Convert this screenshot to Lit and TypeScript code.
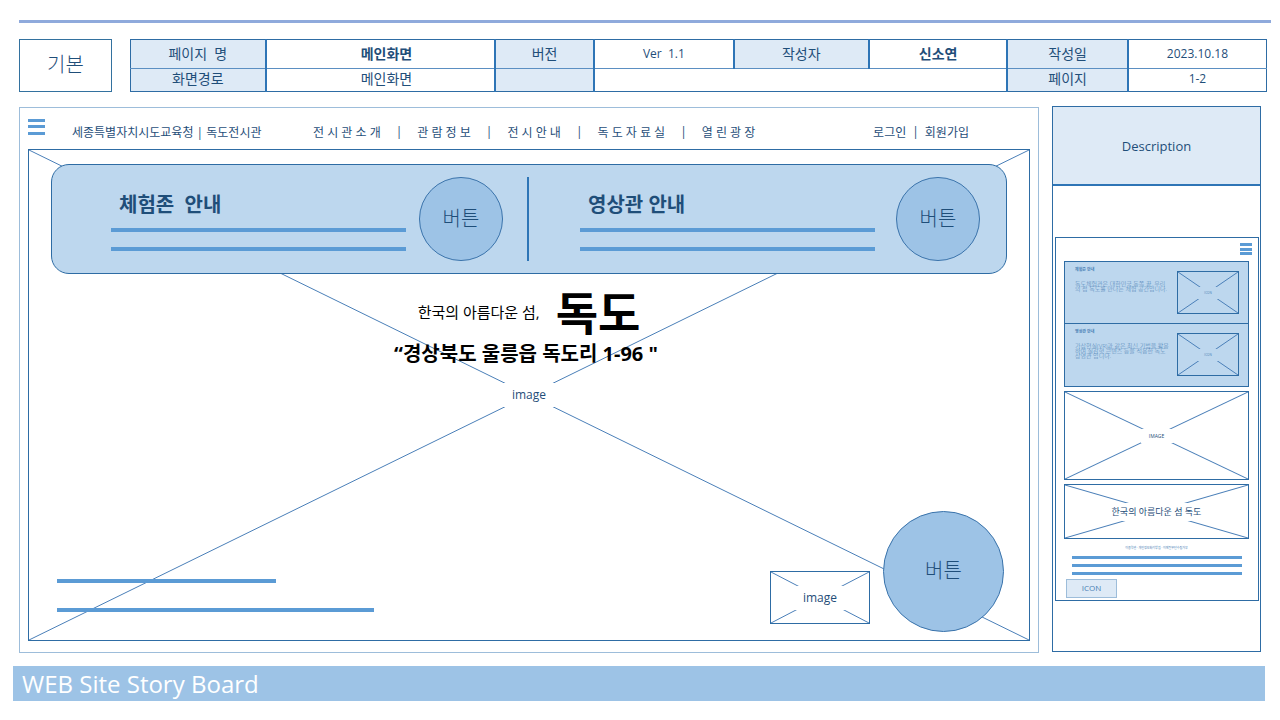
import { LitElement, html, css } from "lit";
import { customElement, property } from "lit/decorators.js";

const base = css`
  *,
  *::before,
  *::after {
    box-sizing: border-box;
  }
  button {
    margin: 0;
    padding: 0;
    font: inherit;
    color: inherit;
    cursor: pointer;
  }
  a {
    color: inherit;
    text-decoration: none;
  }
  h1,
  h2,
  h3,
  p {
    margin: 0;
    font: inherit;
  }
`;

/* Placeholder picture: a framed box with crossing diagonals and a centred label. */
@customElement("wire-image")
class WireImage extends LitElement {
  @property() label = "";

  static styles = [
    base,
    css`
      :host {
        display: grid;
        position: relative;
        border: 1px solid #2e6ca4;
      }
      svg {
        grid-area: 1 / 1;
        width: 100%;
        height: 100%;
        min-height: 0;
        position: absolute;
        inset: 0;
      }
      line {
        stroke: #4a7fb8;
        stroke-width: 1;
        vector-effect: non-scaling-stroke;
      }
      .label {
        grid-area: 1 / 1;
        place-self: center;
        position: relative;
        min-width: var(--label-width, 60px);
        text-align: center;
        line-height: var(--label-height, 24px);
        background: var(--label-fill, #fff);
      }
    `,
  ];

  render() {
    return html`
      <svg viewBox="0 0 100 100" preserveAspectRatio="none" aria-hidden="true">
        <line x1="0" y1="0" x2="100" y2="100"></line>
        <line x1="100" y1="0" x2="0" y2="100"></line>
      </svg>
      <span class="label">${this.label}</span>
    `;
  }
}

@customElement("menu-button")
class MenuButton extends LitElement {
  static styles = [
    base,
    css`
      :host {
        display: block;
      }
      button {
        display: flex;
        flex-direction: column;
        justify-content: space-between;
        width: 100%;
        height: 100%;
        border: 0;
        background: none;
      }
      span {
        height: 3px;
        background: #5b9bd5;
      }
    `,
  ];

  render() {
    return html`<button aria-label="메뉴"><span></span><span></span><span></span></button>`;
  }
}

@customElement("sheet-header")
class SheetHeader extends LitElement {
  static styles = [
    base,
    css`
      :host {
        display: flex;
        gap: 18px;
        height: 53px;
      }
      .kind {
        flex: 0 0 93px;
        display: grid;
        place-items: center;
        padding-bottom: 4px;
        border: 1px solid #33719f;
        font-size: 20px;
        font-weight: 300;
      }
      table {
        flex: 1;
        width: 100%;
        table-layout: fixed;
        border-collapse: collapse;
        border: 1px solid #2e6ca4;
        font-size: 14px;
        text-align: center;
      }
      th,
      td {
        padding: 0;
        border-left: 2px solid #2e75b6;
        border-bottom: 1px solid #5b8fc2;
        line-height: 20px;
        font-weight: 400;
      }
      th:first-child {
        border-left: 1px solid #2e6ca4;
      }
      tr:last-child > * {
        border-bottom: 1px solid #2e6ca4;
      }
      th {
        background: #deeaf6;
      }
      .first {
        height: 28px;
      }
      .second {
        height: 23px;
      }
      .second > * {
        padding-bottom: 2px;
      }
      .strong {
        font-weight: 700;
      }
      .name {
        padding-left: 12px;
      }
      .latin {
        font-size: 12px;
      }
      .c1 {
        width: 11.9%;
      }
      .c2 {
        width: 20.2%;
      }
      .c3 {
        width: 8.7%;
      }
      .c4 {
        width: 12.3%;
      }
      .c5 {
        width: 11.9%;
      }
      .c6 {
        width: 12.2%;
      }
      .c7 {
        width: 10.6%;
      }
    `,
  ];

  render() {
    return html`
      <div class="kind">기본</div>
      <table>
        <colgroup>
          <col class="c1" /><col class="c2" /><col class="c3" /><col class="c4" />
          <col class="c5" /><col class="c6" /><col class="c7" /><col />
        </colgroup>
        <tbody>
          <tr class="first">
            <th scope="row">페이지&nbsp; 명</th>
            <td class="strong name">메인화면</td>
            <th scope="row">버전</th>
            <td class="latin">Ver&nbsp; 1.1</td>
            <th scope="row">작성자</th>
            <td class="strong">신소연</td>
            <th scope="row">작성일</th>
            <td class="latin">2023.10.18</td>
          </tr>
          <tr class="second">
            <th scope="row">화면경로</th>
            <td class="name">메인화면</td>
            <th></th>
            <td colspan="3"></td>
            <th scope="row">페이지</th>
            <td class="latin">1-2</td>
          </tr>
        </tbody>
      </table>
    `;
  }
}

@customElement("desktop-board")
class DesktopBoard extends LitElement {
  static styles = [
    base,
    css`
      :host {
        display: flex;
        flex-direction: column;
        padding: 0 8px 11px;
        border: 1px solid #9dbdda;
      }
      .bar {
        display: flex;
        align-items: center;
        height: 41px;
        padding: 6px 61px 0 0;
        font-size: 12px;
      }
      .menu {
        flex: none;
        width: 17px;
        height: 16px;
        margin: 0 27px 10px 0;
      }
      .site {
        flex: 0 0 241px;
      }
      nav {
        display: flex;
        gap: 15px;
      }
      .account {
        display: flex;
        gap: 6px;
        margin-left: auto;
      }
      .stage {
        flex: 1;
        display: grid;
      }
      .stage > * {
        grid-area: 1 / 1;
      }
      .backdrop {
        font-size: 12px;
      }
      .layer {
        position: relative;
        display: flex;
        flex-direction: column;
        padding: 15px 23px 9px;
      }
      .banner {
        display: flex;
        align-items: center;
        height: 110px;
        padding: 0 26px 0 59px;
        border: 1px solid #2e6ca4;
        border-radius: 18px;
        background: #bdd7ee;
      }
      .topic {
        flex: 1;
        display: flex;
        flex-direction: column;
        gap: 15px;
        padding-top: 5px;
      }
      .topic h2 {
        padding-left: 8px;
        margin-bottom: -5px;
        font-size: 20px;
        line-height: 26px;
        font-weight: 700;
      }
      .stroke {
        height: 4px;
        background: #5b9bd5;
      }
      .round {
        flex: none;
        width: 84px;
        height: 84px;
        padding-bottom: 4px;
        border: 1px solid #3a73ab;
        border-radius: 50%;
        background: #9dc3e6;
        font-size: 20px;
        font-weight: 300;
      }
      .left {
        margin: 0 24px 0 13px;
      }
      .right {
        margin-left: 21px;
      }
      .divider {
        width: 2px;
        height: 84px;
        margin-right: 51px;
        background: #2e75b6;
      }
      .hero {
        margin-top: 8px;
        color: #000;
        text-align: center;
      }
      .lead {
        display: flex;
        align-items: center;
        justify-content: center;
        gap: 16px;
        font-size: 15px;
        line-height: 60px;
      }
      .lead strong {
        font-size: 46px;
      }
      .address {
        padding-right: 6px;
        font-size: 20px;
        line-height: 24px;
        font-weight: 700;
      }
      .bottom {
        display: flex;
        align-items: flex-end;
        margin-top: auto;
        padding: 0 3px 0 6px;
      }
      .notes {
        flex: 1;
        display: grid;
        gap: 25px;
        padding-bottom: 20px;
      }
      .short {
        width: 30.7%;
      }
      .long {
        width: 44.4%;
      }
      .thumb {
        width: 100px;
        height: 53px;
        margin: 0 13px 8px 0;
        font-size: 12px;
        --label-width: 50px;
      }
      .big {
        width: 121px;
        height: 121px;
      }
    `,
  ];

  render() {
    const menu = ["전 시 관 소 개", "관 람 정 보", "전 시 안 내", "독 도 자 료 실", "열 린 광 장"];
    return html`
      <header class="bar">
        <menu-button class="menu"></menu-button>
        <a class="site" href="#">세종특별자치시도교육청 | 독도전시관</a>
        <nav>
          ${menu.map((item, i) => html`${i ? html`<span>|</span>` : ""}<a href="#">${item}</a>`)}
        </nav>
        <div class="account"><a href="#">로그인</a><span>|</span><a href="#">회원가입</a></div>
      </header>
      <div class="stage">
        <wire-image class="backdrop" label="image"></wire-image>
        <div class="layer">
          <section class="banner">
            <div class="topic">
              <h2>체험존&nbsp; 안내</h2>
              <div class="stroke"></div>
              <div class="stroke"></div>
            </div>
            <button class="round left">버튼</button>
            <div class="divider"></div>
            <div class="topic">
              <h2>영상관 안내</h2>
              <div class="stroke"></div>
              <div class="stroke"></div>
            </div>
            <button class="round right">버튼</button>
          </section>
          <section class="hero">
            <p class="lead"><span>한국의 아름다운 섬,</span><strong>독도</strong></p>
            <p class="address">“경상북도 울릉읍 독도리 1-96 "</p>
          </section>
          <section class="bottom">
            <div class="notes">
              <div class="stroke short"></div>
              <div class="stroke long"></div>
            </div>
            <wire-image class="thumb" label="image"></wire-image>
            <button class="round big">버튼</button>
          </section>
        </div>
      </div>
    `;
  }
}

@customElement("mobile-board")
class MobileBoard extends LitElement {
  static styles = [
    base,
    css`
      :host {
        display: flex;
        flex-direction: column;
        border: 1px solid #2e6ca4;
      }
      .title {
        display: grid;
        place-items: center;
        height: 79px;
        border-bottom: 2px solid #2e75b6;
        background: #deeaf6;
        font-size: 13px;
      }
      .phone {
        display: flex;
        flex-direction: column;
        margin: 51px 1px 0 2px;
        padding: 5px 9px 2px 8px;
        border: 1px solid #2e6ca4;
      }
      .menu {
        align-self: flex-end;
        width: 12px;
        height: 12px;
        margin: 0 -3px 6px 0;
      }
      .card {
        display: flex;
        justify-content: space-between;
        height: 63px;
        padding: 5px 9px 0 10px;
        border: 1px solid #2e6ca4;
        background: #bdd7ee;
        color: #4a7fb5;
        font-size: 6px;
        line-height: 5px;
      }
      .card + .card {
        border-top: 0;
      }
      .copy {
        width: 95px;
        word-break: break-all;
      }
      .copy h3 {
        margin-bottom: 10px;
        font-size: 4px;
        font-weight: 700;
      }
      .copy p {
        font-weight: 300;
      }
      .shot {
        width: 62px;
        height: 43px;
        margin-top: 4px;
        font-size: 3px;
        --label-width: 20px;
        --label-height: 12px;
        --label-fill: #bdd7ee;
      }
      .photo {
        height: 89px;
        margin-top: 4px;
        font-size: 5px;
        --label-width: 32px;
        --label-height: 14px;
      }
      .wide {
        height: 55px;
        margin-top: 4px;
        font-size: 9px;
        --label-height: 18px;
      }
      .terms {
        margin: 6px 0 5px;
        font-size: 3px;
        line-height: 6px;
        text-align: center;
        color: #4a7fb5;
      }
      .strokes {
        display: grid;
        gap: 5px;
        padding: 0 7px 0 8px;
      }
      .stroke {
        height: 3px;
        background: #5b9bd5;
      }
      .icon {
        width: 51px;
        height: 19px;
        margin: 4px 0 0 2px;
        padding-bottom: 2px;
        border: 1px solid #9dbdda;
        background: #deeaf6;
        color: #4a7fb5;
        font-size: 8px;
      }
    `,
  ];

  render() {
    return html`
      <h2 class="title">Description</h2>
      <div class="phone">
        <menu-button class="menu"></menu-button>
        <section class="card">
          <div class="copy">
            <h3>체험존 안내</h3>
            <p>독도체험관은 대한민국 동쪽 끝, 우리의 섬 독도를 만나는 체험 공간입니다.</p>
          </div>
          <wire-image class="shot" label="ICON"></wire-image>
        </section>
        <section class="card">
          <div class="copy">
            <h3>영상관 안내</h3>
            <p>가상현실(VR)과 같은 최신 기법을 활용하여 실감형 콘텐츠 등을 적용한 독도 상영관 입니다.</p>
          </div>
          <wire-image class="shot" label="ICON"></wire-image>
        </section>
        <wire-image class="photo" label="IMAGE"></wire-image>
        <wire-image class="wide" label="한국의 아름다운 섬 독도"></wire-image>
        <p class="terms">이용약관 · 개인정보처리방침 · 이메일무단수집거부</p>
        <div class="strokes">
          <div class="stroke"></div>
          <div class="stroke"></div>
          <div class="stroke"></div>
        </div>
        <button class="icon">ICON</button>
      </div>
    `;
  }
}

@customElement("app-root")
class AppRoot extends LitElement {
  static styles = [
    base,
    css`
      :host {
        display: flex;
        flex-direction: column;
        box-sizing: border-box;
        min-height: 100vh;
        padding: 20px 13px 19px;
        background: #fff;
        color: #1f4e79;
        font-family: "Open Sans", "Noto Sans CJK KR", sans-serif;
      }
      .rule {
        height: 3px;
        margin: 0 -4px 0 6px;
        background: #8faadc;
      }
      .head {
        margin: 16px 0 0 6px;
      }
      .boards {
        flex: 1;
        display: flex;
        gap: 13px;
        margin: 14px 6px 13px;
      }
      .desktop {
        flex: 1;
        margin-top: 1px;
      }
      .mobile {
        flex: 0 0 209px;
        margin-bottom: 1px;
      }
      footer {
        margin-right: 2px;
        padding-left: 9px;
        background: #9dc3e6;
        color: #fff;
      }
      h1 {
        font-size: 24px;
        line-height: 35px;
      }
    `,
  ];

  render() {
    return html`
      <div class="rule"></div>
      <sheet-header class="head"></sheet-header>
      <main class="boards">
        <desktop-board class="desktop"></desktop-board>
        <mobile-board class="mobile"></mobile-board>
      </main>
      <footer><h1>WEB Site Story Board</h1></footer>
    `;
  }
}
